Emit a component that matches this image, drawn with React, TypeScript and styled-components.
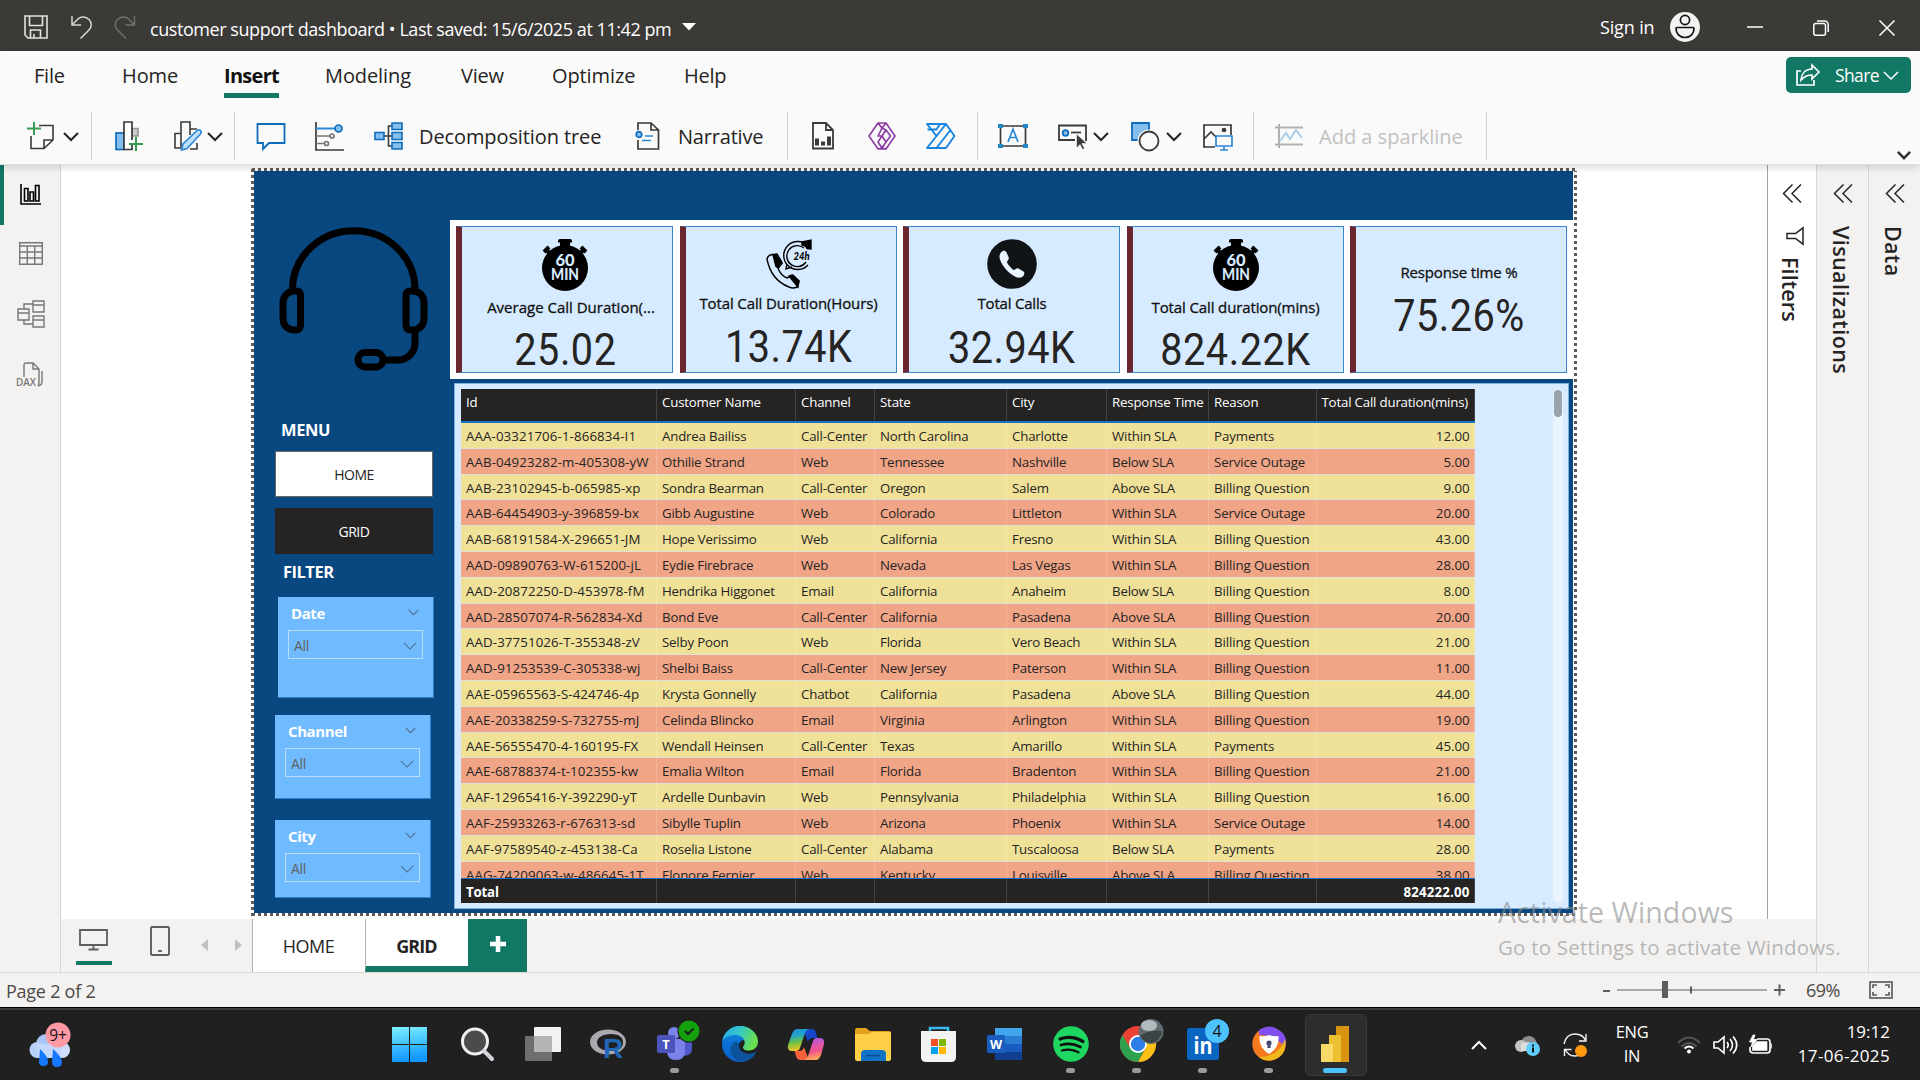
import React from "react";
import styled, { createGlobalStyle, css } from "styled-components";

const Global = createGlobalStyle`
  * { box-sizing: border-box; }
  body { margin: 0; overflow: hidden; font-family: "Open Sans", "Noto Sans", sans-serif; color: #252423; }
  svg { display: block; flex: none; overflow: visible; }
`;

const green = "#117865";
const navy = "#08477f";

const Screen = styled.div`
  position: relative;
  width: 1920px;
  height: 1080px;
  overflow: hidden;
  display: grid;
  grid-template-rows: 51px 114px 807px 35px 73px;
  background: #fff;
`;

/* A single-line text with its own size, tracking and reserved width */
const Txt = styled.span<{ $s: number; $w?: number; $ls?: number; $ml?: number; $mt?: number; $c?: string }>`
  flex: none;
  white-space: nowrap;
  font-size: ${(p) => p.$s}px;
  width: ${(p) => (p.$w ? p.$w + "px" : "auto")};
  letter-spacing: ${(p) => p.$ls ?? 0}px;
  margin-left: ${(p) => p.$ml ?? 0}px;
  margin-top: ${(p) => p.$mt ?? 0}px;
  color: ${(p) => p.$c ?? "inherit"};
`;

const Glyph = styled.svg<{ $ml?: number; $mt?: number }>`
  margin-left: ${(p) => p.$ml ?? 0}px;
  margin-top: ${(p) => p.$mt ?? 0}px;
  fill: none;
`;

/* ---------- title bar ---------- */
const TitleBar = styled.header`
  display: flex;
  align-items: center;
  background: #3b3a37;
  color: #fff;
  padding: 3px 25px 0 24px;
`;
const Push = styled.div`
  flex: 1;
`;

function Title() {
  return (
    <TitleBar>
      <Glyph width="24" height="24" viewBox="0 0 24 24" stroke="#e4e2e0" strokeWidth="1.6">
        <path d="M1 1h22v22H4l-3-3z M5.500 1v9.500h13V1 M6.500 23v-8h10v8 M10 19v4" />
      </Glyph>
      <Glyph $ml={23} width="21" height="24" viewBox="0 0 21 24" stroke="#d8d6d4" strokeWidth="1.5">
        <path d="M1 1v9h9 M1.500 9.500L7 4c3-3 8-2.500 11 .5s3 7.500 0 10.500L9.500 23.500" />
      </Glyph>
      <Glyph $ml={22} width="22" height="24" viewBox="0 0 21 24" stroke="#72716f" strokeWidth="1.4">
        <path d="M20 1v9h-9 M19.500 9.500L14 4C11 1 6 1.500 3 4.500s-3 7.500 0 10.500L11.500 23.500" />
      </Glyph>
      <Txt $s={18} $ls={-0.44} $ml={14} $mt={4} $w={532}>customer support dashboard • Last saved: 15/6/2025 at 11:42 pm</Txt>
      <Glyph width="14" height="8" viewBox="0 0 14 8"><path d="M0 0h14L7 7.500z" fill="#fff" /></Glyph>
      <Push />
      <Txt $s={18} $w={70} $ls={-0.15}>Sign in</Txt>
      <Glyph width="30" height="30" viewBox="0 0 30 30" stroke="#111" strokeWidth="1.700">
        <circle cx="15" cy="15" r="15" fill="#f3f2f1" stroke="none" />
        <circle cx="15" cy="8" r="4.600" />
        <path d="M6 16.500q0-1 1-1h16q1 0 1 1c0 5-3.500 9-9 9s-9-4-9-9z" />
      </Glyph>
      <Glyph $ml={47} width="16" height="16" viewBox="0 0 16 16" stroke="#fff" strokeWidth="1.500"><path d="M0 8h16" /></Glyph>
      <Glyph $ml={50} $mt={2} width="16" height="16" viewBox="0 0 16 16" stroke="#fff" strokeWidth="1.500">
        <rect x=".8" y="3.500" width="11.700" height="11.700" rx="2" />
        <path d="M4 1h7.500a3.700 3.700 0 0 1 3.700 3.700V12" />
      </Glyph>
      <Glyph $ml={50} $mt={2} width="16" height="16" viewBox="0 0 17 17" stroke="#fff" strokeWidth="1.600"><path d="M.5.5l16 16M16.500.5l-16 16" /></Glyph>
    </TitleBar>
  );
}

/* ---------- ribbon ---------- */
const Ribbon = styled.section`
  display: grid;
  grid-template-rows: 60px 54px;
  background: #fafafa;
  border-bottom: 1px solid #e1dfdd;
  box-shadow: 0 2px 8px rgba(0, 0, 0, 0.16);
  z-index: 2;
`;
const TabRow = styled.nav`
  display: flex;
  padding: 0 9px 0 34px;
  align-items: flex-start;
`;
const Tab = styled.div<{ $w: number; $gap: number; $on?: boolean; $ls: number }>`
  width: ${(p) => p.$w}px;
  margin-right: ${(p) => p.$gap}px;
  height: 47px;
  padding-top: 11px;
  line-height: 28px;
  font-size: 20px;
  white-space: nowrap;
  letter-spacing: ${(p) => p.$ls}px;
  border-bottom: 5px solid ${(p) => (p.$on ? green : "transparent")};
  font-weight: ${(p) => (p.$on ? 700 : 400)};
  color: ${(p) => (p.$on ? "#111" : "#252423")};
`;
const ShareButton = styled.button`
  display: flex;
  align-items: center;
  width: 125px;
  height: 36px;
  margin-top: 6px;
  padding: 0 12px 0 10px;
  border: 0;
  border-radius: 5px;
  background: ${green};
  color: #fff;
  font-family: inherit;
`;
const ToolRow = styled.div`
  display: flex;
  align-items: center;
  height: 50px;
  padding-left: 27px;
`;
const Divider = styled.i<{ $l: number; $r: number }>`
  flex: none;
  width: 1px;
  height: 48px;
  margin: 0 ${(p) => p.$r}px 0 ${(p) => p.$l}px;
  background: #d2d0ce;
`;
const CollapseSlot = styled.div`
  margin: 37px 9px 0 auto;
`;
const Chev = ({ ml, c = "#252423", w = 16, sw = 2 }: { ml: number; c?: string; w?: number; sw?: number }) => (
  <Glyph $ml={ml} width={w} height={w / 2 + 1} viewBox="0 0 16 9" stroke={c} strokeWidth={sw}><path d="M1 1l7 7 7-7" /></Glyph>
);
const B = "#0f6cbd", LB = "#83beec", K = "#3b3a39";

const tabs: [string, number, number, number][] = [
  ["File", 31, 57, -0.2], ["Home", 56, 46, -0.1], ["Insert", 55, 46, -0.7], ["Modeling", 88, 48, -0.1],
  ["View", 45, 46, -0.2], ["Optimize", 85, 47, -0.1], ["Help", 44, 0, -0.3],
];

function RibbonBar() {
  return (
    <Ribbon>
      <TabRow>
        {tabs.map(([t, w, g, ls]) => <Tab key={t} $w={w} $gap={g} $ls={ls} $on={t === "Insert"}>{t}</Tab>)}
        <Push />
        <ShareButton>
          <Glyph width="24" height="22" viewBox="0 0 24 22" stroke="#fff" strokeWidth="1.700">
            <path d="M5 7H1v14h17v-5 M16 1l7 7-7 7v-4c-5 0-8 1.500-11 5 .5-6 4-11 11-11z" />
          </Glyph>
          <Txt $s={17.5} $ml={12} $w={50} $ls={-0.6}>Share</Txt>
          <Chev ml={1} c="#fff" w={16} sw={1.5} />
        </ShareButton>
      </TabRow>
      <ToolRow>
        <Glyph width="28" height="28" viewBox="0 0 28 28" stroke={K} strokeWidth="1.600">
          <path d="M12 3.500h14V18l-9 8.500H4V14 M26 18h-9v8.500" /><path d="M0 6.500h14M7 0v13" stroke="#3a9b4f" strokeWidth="2" />
        </Glyph>
        <Chev ml={8} />
        <Divider $l={12} $r={23} />
        <Glyph width="28" height="30" viewBox="0 0 28 30" stroke={K} strokeWidth="1.700">
          <rect x="1" y="12" width="8" height="16.500" fill={LB} stroke={B} /><path d="M17 7.500h6V15h-6z" fill="#ccc" stroke="#979593" />
          <path d="M17 22v6.500H9V1h8v18" fill="#fff" /><path d="M14 23h14M21 16v14" stroke="#3a9b4f" strokeWidth="2" />
        </Glyph>
        <Glyph $ml={31} width="28" height="30" viewBox="0 0 28 30" stroke={K} strokeWidth="1.600">
          <path d="M7 27H1V12.500h6M7 27V1h9v13 M16 8h7M16 28h7v-6" /><path d="M7.500 29l1.500-6L23 9.500q2-1.500 3.500 0t0 3.500L13 27.500z" fill="#bfe0f7" stroke="#2b88d8" />
        </Glyph>
        <Chev ml={5} />
        <Divider $l={11} $r={21} />
        <Glyph width="30" height="28" viewBox="0 0 30 28" stroke={B} strokeWidth="1.800"><path d="M1.500 2h27v19H13l-6 6v-6H1.500z" /></Glyph>
        <Glyph $ml={29} width="29" height="29" viewBox="0 0 29 29" stroke="#797775" strokeWidth="1.700">
          <path d="M1 0v28h28" stroke={K} /><path d="M1 6.500h19" stroke="#2b88d8" strokeWidth="2" /><circle cx="23.500" cy="6.500" r="3.500" fill={LB} stroke={B} />
          <path d="M1 14h14M1 21.500h8" /><circle cx="17" cy="14" r="2" /><circle cx="11.500" cy="21.500" r="2" />
        </Glyph>
        <Glyph $ml={30} width="29" height="28" viewBox="0 0 29 28" stroke={B} strokeWidth="1.600">
          <path d="M10 14h9M19 4h-4.500v20H19" stroke={K} />
          <path d="M1 10.500h9v7H1zM18 1h10v6.500H18zM18 10.500h10v7H18zM18 20.500h10V27H18z" fill={LB} />
        </Glyph>
        <Txt $s={20} $ml={16} $w={181} $ls={-0.1}>Decomposition tree</Txt>
        <Glyph $ml={36} width="24" height="28" viewBox="0 0 24 28" stroke={K} strokeWidth="1.700">
          <path d="M2 8V1h13l7.500 7v19H2v-9M15 1v7h7.500" /><circle cx="3" cy="12.500" r="2.800" fill={LB} stroke={B} /><path d="M9 14h8M6 18.500h9" stroke="#2b88d8" />
        </Glyph>
        <Txt $s={20} $ml={18} $w={87} $ls={-0.2}>Narrative</Txt>
        <Divider $l={22} $r={24} />
        <Glyph width="22" height="28" viewBox="0 0 22 28" stroke={K} strokeWidth="1.800">
          <path d="M1 1h13l7 7v18.500H1zM14 1v7h7" /><path d="M5 23.500v-7M11 23.500v-4M17 23.500v-9" strokeWidth="4" />
        </Glyph>
        <Glyph $ml={34} width="28" height="28" viewBox="0 0 28 28" stroke="#8c3aa3" strokeWidth="1.600" strokeLinejoin="round">
          <path d="M10 1h8l9 13-9 13h-8L1 14z M10 1l4 5 4-5 M14 6l-4 8 4 0 4-6-4-2 M10 14l4-0 4 6-4 6-4-6 4-6 M18 8l4.500 6-4.500 6 M14 26l-4 1 M14 26l4 1" />
        </Glyph>
        <Glyph $ml={30} width="30" height="26" viewBox="0 0 30 26" stroke="#1684e0" strokeWidth="1.900" strokeLinejoin="round">
          <path d="M1 1h19l8.500 12-8.500 12H1l9.500-12z M1.500 6.500h9L14 1 M1 25L20 1 M10.500 25L24.500 7" />
        </Glyph>
        <Divider $l={21} $r={20} />
        <Glyph width="30" height="26" viewBox="0 0 30 26" stroke={K} strokeWidth="1.700">
          <path d="M2.500 3h25v20h-25z" /><path d="M0 1h5v4H0zM25 1h5v4h-5zM0 21h5v4H0zM25 21h5v4h-5z" fill="#2487c9" stroke="none" />
          <path d="M10 19l5-13 5 13M12 14.500h6" stroke="#2b88d8" />
        </Glyph>
        <Glyph $ml={30} width="29" height="27" viewBox="0 0 29 27" stroke={K} strokeWidth="1.800">
          <path d="M17 17H1V2.500h27V18" /><circle cx="7.500" cy="10" r="2.800" fill={LB} stroke={B} /><path d="M13 9.500h10" />
          <path d="M18.500 11v14l3.500-3.500 2.500 5 2-1-2.500-5h5z" fill={K} stroke="#fafafa" strokeWidth=".6" />
        </Glyph>
        <Chev ml={6} />
        <Glyph $ml={22} width="28" height="29" viewBox="0 0 28 29" stroke={K} strokeWidth="1.800">
          <path d="M1 1h17v17H1z" fill={LB} stroke={B} /><circle cx="18" cy="19" r="11.500" fill="#fafafa" stroke="none" /><circle cx="18" cy="19" r="9.500" fill="#fafafa" />
        </Glyph>
        <Chev ml={7} />
        <Glyph $ml={21} width="30" height="27" viewBox="0 0 30 27" stroke={K} strokeWidth="1.700">
          <path d="M12 24H1V2h27v10M1 16l7-7 6 6" /><circle cx="21" cy="7" r="1.500" fill={K} />
          <path d="M13 13h16v10H13zM21 23v4M17 27h8" stroke="#2b88d8" fill="#fafafa" />
        </Glyph>
        <Divider $l={20} $r={21} />
        <Glyph width="29" height="26" viewBox="0 0 29 26" stroke="#b3b1af" strokeWidth="2">
          <path d="M0 4.500h28M0 21.500h28M4 1v24" /><path d="M5 18l6-8 4 6 6-9 6 8" stroke="#a9cfe6" />
        </Glyph>
        <Txt $s={20} $ml={15} $w={145} $ls={0} $c="#c3c1bf">Add a sparkline</Txt>
        <Divider $l={22} $r={0} />
        <CollapseSlot><Chev ml={0} w={14} c="#333" sw={3} /></CollapseSlot>
      </ToolRow>
    </Ribbon>
  );
}

/* ---------- body ---------- */
const Body = styled.main`
  display: grid;
  grid-template-columns: 61px 1755px 52px 52px;
  min-height: 0;
`;
const Rail = styled.aside`
  background: #f3f2f1;
  border-right: 1px solid #d9d7d5;
`;
const RailItem = styled.div<{ $on?: boolean; $h: number }>`
  height: ${(p) => p.$h}px;
  display: flex;
  align-items: center;
  justify-content: center;
  padding-right: ${(p) => (p.$on ? 4 : 0)}px;
  padding-left: ${(p) => (p.$on ? 0 : 2)}px;
  padding-top: ${(p) => (p.$on ? 0 : 2)}px;
  padding-bottom: ${(p) => (p.$on ? 2 : 0)}px;
  border-left: ${(p) => (p.$on ? 4 : 0)}px solid ${green};
`;
const Center = styled.div`
  display: grid;
  grid-template-rows: 754px 53px;
`;
const Stage = styled.div`
  display: grid;
  grid-template-columns: 190px 1326px 190px 49px;
  background: #fff;
`;
const dots = (dir: string) => `repeating-linear-gradient(${dir}, #5d5b59 0 3px, #fff 3px 6px)`;
const Dotted = styled.div`
  grid-column: 2;
  height: 748px;
  margin-top: 3px;
  padding: 3px 4px 3px 3px;
  background-image: ${dots("90deg")}, ${dots("90deg")}, ${dots("180deg")}, ${dots("180deg")};
  background-size: 100% 3px, 100% 3px, 3px 100%, 3px 100%;
  background-position: 1px 0, 1px 100%, 0 1px, 100% 1px;
  background-repeat: no-repeat;
`;
const Report = styled.div`
  display: grid;
  grid-template-columns: 196px 1fr;
  grid-template-rows: 49px 1fr;
  height: 742px;
  background: ${navy};
`;
const Side = styled.div`
  grid-row: 1 / 3;
  display: flex;
  flex-direction: column;
  padding: 54px 16px 0 21px;
`;
const SideTitle = styled.h3<{ $mt: number; $ml: number; $h: number; $ls: number }>`
  margin: ${(p) => p.$mt}px 0 0 ${(p) => p.$ml}px;
  height: ${(p) => p.$h}px;
  line-height: 24px;
  font-size: 16.5px;
  font-weight: 700;
  letter-spacing: ${(p) => p.$ls}px;
  color: #fff;
`;
const NavButton = styled.button<{ $dark?: boolean }>`
  flex: none;
  width: 158px;
  height: 46px;
  margin: 0 0 11px;
  padding: 1px 0 0;
  font: 400 14px "Open Sans", sans-serif;
  letter-spacing: -0.5px;
  color: ${(p) => (p.$dark ? "#fff" : "#252423")};
  background: ${(p) => (p.$dark ? "#252423" : "#fff")};
  border: 1px solid ${(p) => (p.$dark ? "#252423" : "#666")};
`;
const SlicerBox = styled.section<{ $h: number; $mt: number; $ml?: number }>`
  flex: none;
  width: 156px;
  height: ${(p) => p.$h}px;
  margin: ${(p) => p.$mt}px 0 0 ${(p) => p.$ml ?? 0}px;
  padding: 4px 10px 0 10px;
  background: #70bbff;
  border: solid #2f7dc7;
  border-width: 0 1px 1px 0;
`;
const SlicerHead = styled.div`
  display: flex;
  justify-content: space-between;
  height: 29px;
  padding: 0 4px 0 3px;
  line-height: 24px;
  font-size: 15px;
  font-weight: 700;
  letter-spacing: -0.4px;
  color: #fff;
  svg { margin-top: 8px; }
`;
const SlicerSelect = styled.div`
  display: flex;
  justify-content: space-between;
  align-items: center;
  height: 29px;
  padding: 2px 5px 0 5px;
  border: 1px solid #b9dcfb;
  font-size: 14px;
  letter-spacing: -0.3px;
  color: #605e5c;
`;

function Slicer({ name, h, mt, ml }: { name: string; h: number; mt: number; ml?: number }) {
  return (
    <SlicerBox $h={h} $mt={mt} $ml={ml}>
      <SlicerHead>{name}<Chev ml={0} w={11} c="#4d6f90" sw={1.5} /></SlicerHead>
      <SlicerSelect>All<Chev ml={0} w={14} c="#4d6f90" sw={1.3} /></SlicerSelect>
    </SlicerBox>
  );
}

const Main = styled.div`
  grid-column: 2;
  grid-row: 2;
  display: grid;
  grid-template-rows: 159px 534px;
`;
const KpiStrip = styled.div`
  display: grid;
  grid-template-columns: repeat(5, 217px);
  column-gap: 6.5px;
  padding: 6px 5px 6px 6px;
  background: #fff;
`;
const KpiCard = styled.article<{ $pt: number }>`
  display: flex;
  flex-direction: column;
  align-items: center;
  height: 147px;
  padding-top: ${(p) => p.$pt}px;
  padding-right: 4px;
  background: #d6ebff;
  border: 1px solid #3a86cd;
  border-left: 6px solid #6b2630;
`;
const KpiLabel = styled.div<{ $mt: number; $ls: number; $ml?: number }>`
  margin-top: ${(p) => p.$mt}px;
  margin-left: ${(p) => p.$ml ?? 0}px;
  line-height: 24px;
  font-size: 15px;
  font-weight: 500;
  -webkit-text-stroke: 0.3px #111;
  letter-spacing: ${(p) => p.$ls}px;
  white-space: nowrap;
  color: #111;
`;
const KpiValue = styled.div<{ $mt: number }>`
  margin-top: ${(p) => p.$mt}px;
  font: 400 44.5px/44px Roboto, sans-serif;
  letter-spacing: 0.6px;
  transform: scaleX(0.89);
  white-space: nowrap;
`;

const Stopwatch = () => (
  <Glyph width="46" height="52" viewBox="0 0 46 52">
    <circle cx="23" cy="29" r="23" fill="#000" />
    <path d="M18 0h10q2 0 2 2v1.500h-2V9H18V3.500h-2V2q0-2 2-2z" fill="#000" />
    <path d="M2 13l5-5M4 10.500l6 6M44 13l-5-5M42 10.500l-6 6" stroke="#000" strokeWidth="4" />
    <text x="23" y="27" textAnchor="middle" fontFamily="Lato, sans-serif" fontWeight="900" fontSize="16.500" fill="#d6ebff" textLength="19">60</text>
    <text x="23" y="41" textAnchor="middle" fontFamily="Lato, sans-serif" fontWeight="900" fontSize="16" fill="#d6ebff" textLength="28" lengthAdjust="spacingAndGlyphs">MIN</text>
  </Glyph>
);
const Phone24 = () => (
  <Glyph width="46" height="48" viewBox="0 0 46 48" stroke="#000" strokeWidth="1.400">
    <path d="M1 19q1-4 5-4.500h5l5 9-4 5q3 7 9 9.500l6-3 6 6-2 6q-4 2-8 0Q5 40 1 19z" fill="#d6ebff" />
    <path d="M7 15l4-1 5 8.500-4 5-2-1zM26 35l7 6-1 6-9-11z" fill="#000" />
    <path d="M42 6a14 14 0 1 0 0 19M38 8a10.500 10.500 0 1 0 2 14 M21 24l-1 5 6-2" />
    <path d="M36 2l9-2v9l-4-.5q-1-3-5-3.500z" fill="#000" />
    <text x="27.500" y="20" fontFamily="Lato, sans-serif" fontStyle="italic" fontWeight="900" fontSize="11.500" fill="#000" stroke="none" textLength="16" lengthAdjust="spacingAndGlyphs">24h</text>
  </Glyph>
);
const PhoneDisc = () => (
  <Glyph width="50" height="50" viewBox="0 0 50 50">
    <circle cx="25" cy="25" r="24.800" fill="#111417" />
    <path d="M14 13.500c2-2.500 4.500-2 5.500 0l2 4.500c.7 1.600 0 2.800-1.500 4.500-.8 1 4 7.500 7 8.500 1 .3 2.500-2.500 4.500-1.500l5 3c1.500 1 1 3.500-1.500 5.500-3 2-7 0-11-3C18 30.500 13 23 12.500 18c0-2 .5-3.500 1.500-4.500z" fill="#eaf4ff" />
  </Glyph>
);
const Headset = () => (
  <Glyph $ml={4} width="149" height="146" viewBox="0 0 149 146" stroke="#000" strokeWidth="7">
    <path d="M13.500 63V62a61.300 58.500 0 0 1 122.500 0v1 M136 106v12a17 17 0 0 1-17 17h-12" />
    <path d="M16 66h1q4.500 0 4.500 4.500v29q0 5.500-4.500 5.500h-1c-8 0-12-5-12-12V78c0-7 5-12 12-12zM132 66h1c8 0 12 5 12 12v15c0 7-4 12-12 12h-1q-5 0-5-5.500v-29q0-4.500 5-4.500z" />
    <rect x="79" y="127.500" width="25" height="14.500" rx="7.200" />
  </Glyph>
);

const kpis = [
  { label: "Average Call Duration(...", value: "25.02", icon: <Stopwatch />, pt: 12, mt: 4, vt: 9, ls: 0, ml: 12 },
  { label: "Total Call Duration(Hours)", value: "13.74K", icon: <Phone24 />, pt: 13, mt: 3, vt: 10, ls: -0.12 },
  { label: "Total Calls", value: "32.94K", icon: <PhoneDisc />, pt: 12, mt: 2, vt: 10.5, ls: -0.2 },
  { label: "Total Call duration(mins)", value: "824.22K", icon: <Stopwatch />, pt: 12, mt: 4, vt: 9, ls: -0.12 },
  { label: "Response time %", value: "75.26%", icon: null, pt: 33, mt: 0, vt: 10, ls: -0.15 },
];

const TablePanel = styled.div`
  margin: 4px;
  display: flex;
  justify-content: space-between;
  padding: 5px 5px 5px 6px;
  background: #d6ebff;
  border: 1px solid #7eb0dd;
  height: 526px;
`;
const Grid = styled.div`
  width: 1014px;
  height: 514px;
  display: flex;
  flex-direction: column;
`;
const rowGrid = css`
  display: grid;
  grid-template-columns: 196px 139px 79px 132px 100px 102px 107.5px 158.5px;
  grid-template-rows: 100%;
`;
const HeadRow = styled.div`
  ${rowGrid}
  flex: none;
  height: 34px;
  background: #252423;
  border-bottom: 2px solid #1571c9;
  color: #fff;
`;
const Rows = styled.div`
  height: 454.500px;
  overflow: hidden;
`;
const Row = styled.div<{ $alt: boolean }>`
  ${rowGrid}
  height: 25.8px;
  background: ${(p) => (p.$alt ? "#f0a587" : "#f0e199")};
  border-bottom: 1px solid #e3e0d8;
`;
const TotalRow = styled.div`
  ${rowGrid}
  flex: none;
  height: 25.500px;
  background: #252423;
  border-top: 1px solid #1571c9;
  color: #fff;
  font-weight: 700;
`;
const Cell = styled.div<{ $right?: boolean; $head?: boolean; $total?: boolean; $ls?: number }>`
  min-height: 0;
  padding: 0 ${(p) => (p.$right ? (p.$head ? 6 : 4.5) : 0)}px 0 5px;
  text-align: ${(p) => (p.$right ? "right" : "left")};
  font-size: 13.3px;
  line-height: ${(p) => (p.$head || p.$total ? 26 : 27)}px;
  letter-spacing: ${(p) => p.$ls ?? -0.2}px;
  white-space: nowrap;
  border-right: 1px solid ${(p) => (p.$head || p.$total ? "#444" : "rgba(255,255,255,0.18)")};
`;
const Track = styled.div`
  width: 10px;
  border-radius: 5px;
  background: #e9f4ff;
  padding: 1px;
  &::before {
    content: "";
    display: block;
    height: 27px;
    border-radius: 4px;
    background: #9aa3ab;
  }
`;

const heads = ["Id", "Customer Name", "Channel", "State", "City", "Response Time", "Reason", "Total Call duration(mins)"];
const W = "Within SLA", A = "Above SLA", L = "Below SLA", BQ = "Billing Question", SO = "Service Outage", CC = "Call-Center";
const data: string[][] = [
  ["AAA-03321706-1-866834-I1", "Andrea Bailiss", CC, "North Carolina", "Charlotte", W, "Payments", "12.00"],
  ["AAB-04923282-m-405308-yW", "Othilie Strand", "Web", "Tennessee", "Nashville", L, SO, "5.00"],
  ["AAB-23102945-b-065985-xp", "Sondra Bearman", CC, "Oregon", "Salem", A, BQ, "9.00"],
  ["AAB-64454903-y-396859-bx", "Gibb Augustine", "Web", "Colorado", "Littleton", W, SO, "20.00"],
  ["AAB-68191584-X-296651-JM", "Hope Verissimo", "Web", "California", "Fresno", W, BQ, "43.00"],
  ["AAD-09890763-W-615200-jL", "Eydie Firebrace", "Web", "Nevada", "Las Vegas", W, BQ, "28.00"],
  ["AAD-20872250-D-453978-fM", "Hendrika Higgonet", "Email", "California", "Anaheim", L, BQ, "8.00"],
  ["AAD-28507074-R-562834-Xd", "Bond Eve", CC, "California", "Pasadena", A, BQ, "20.00"],
  ["AAD-37751026-T-355348-zV", "Selby Poon", "Web", "Florida", "Vero Beach", W, BQ, "21.00"],
  ["AAD-91253539-C-305338-wj", "Shelbi Baiss", CC, "New Jersey", "Paterson", W, BQ, "11.00"],
  ["AAE-05965563-S-424746-4p", "Krysta Gonnelly", "Chatbot", "California", "Pasadena", A, BQ, "44.00"],
  ["AAE-20338259-S-732755-mJ", "Celinda Blincko", "Email", "Virginia", "Arlington", W, BQ, "19.00"],
  ["AAE-56555470-4-160195-FX", "Wendall Heinsen", CC, "Texas", "Amarillo", W, "Payments", "45.00"],
  ["AAE-68788374-t-102355-kw", "Emalia Wilton", "Email", "Florida", "Bradenton", W, BQ, "21.00"],
  ["AAF-12965416-Y-392290-yT", "Ardelle Dunbavin", "Web", "Pennsylvania", "Philadelphia", W, BQ, "16.00"],
  ["AAF-25933263-r-676313-sd", "Sibylle Tuplin", "Web", "Arizona", "Phoenix", W, SO, "14.00"],
  ["AAF-97589540-z-453138-Ca", "Roselia Listone", CC, "Alabama", "Tuscaloosa", L, "Payments", "28.00"],
  ["AAG-74209063-w-486645-1T", "Elonore Fernier", "Web", "Kentucky", "Louisville", A, BQ, "38.00"],
];

/* ---------- collapsed panes ---------- */
const Pane = styled.aside<{ $white?: boolean }>`
  display: flex;
  flex-direction: column;
  align-items: center;
  padding-top: 19px;
  padding-left: ${(p) => (p.$white ? 1 : 2)}px;
  border-left: 1px solid ${(p) => (p.$white ? "#a5a3a1" : "#d9d7d5")};
  background: ${(p) => (p.$white ? "#fff" : "#f3f2f1")};
`;
const Vertical = styled.div<{ $mt: number; $ls: number }>`
  writing-mode: vertical-rl;
  margin-top: ${(p) => p.$mt}px;
  margin-right: 5px;
  font-size: 21.5px;
  line-height: 24px;
  font-weight: 600;
  letter-spacing: ${(p) => p.$ls}px;
`;
const Expand = () => (
  <Glyph width="19" height="19" viewBox="0 0 19 19" stroke="#252423" strokeWidth="1.500"><path d="M9.500.5l-9 9 9 9M18 .5l-9 9 9 9" /></Glyph>
);

/* ---------- page tabs and status ---------- */
const PageBar = styled.div`
  display: flex;
  background: #f3f2f1;
`;
const ViewIcons = styled.div`
  width: 191px;
  display: flex;
  align-items: flex-start;
  padding: 7px 0 0 15px;
`;
const ViewOn = styled.div`
  display: flex;
  width: 36px;
  height: 39px;
  padding: 3px 0 0 3px;
  border-bottom: 4px solid ${green};
`;
const PageTab = styled.div<{ $w: number; $on?: boolean }>`
  width: ${(p) => p.$w}px;
  border-left: 1px solid #b3b1af;
  border-bottom: ${(p) => (p.$on ? 6 : 0)}px solid ${green};
  background: #fff;
  padding: 4px 1px 0 0;
  text-align: center;
  line-height: 46px;
  font-size: 18px;
  font-weight: ${(p) => (p.$on ? 700 : 400)};
  letter-spacing: ${(p) => (p.$on ? -0.9 : -0.5)}px;
`;
const AddPage = styled.button`
  width: 59px;
  border: 0;
  padding: 0 0 3px 1px;
  background: ${green};
  display: flex;
  align-items: center;
  justify-content: center;
`;
const Status = styled.footer`
  display: flex;
  align-items: center;
  background: #f3f2f1;
  border-top: 1px solid #d9d7d5;
  padding: 0 27px 0 6px;
  color: #4b4948;
`;

/* ---------- desktop watermark and taskbar ---------- */
const Watermark = styled.div`
  position: absolute;
  z-index: 5;
  left: 1498px;
  top: 892px;
  color: rgba(140, 140, 140, 0.6);
  white-space: nowrap;
`;
const MarkBig = styled.div`
  font-size: 28.500px;
  line-height: 40px;
  letter-spacing: 0.1px;
`;
const MarkSmall = styled.div`
  font-size: 20.500px;
  line-height: 30px;
  letter-spacing: 0.2px;
`;
const Taskbar = styled.div`
  display: flex;
  align-items: center;
  background: #202020;
  border-top: 1px solid #000;
  box-shadow: inset 0 2px 0 #3c3c3c;
  padding: 2px 30px 0 28px;
  color: #fff;
`;
const Apps = styled.div`
  display: flex;
  margin-left: 304px;
`;
const AppSlot = styled.div<{ $active?: boolean }>`
  position: relative;
  width: 66px;
  height: 70px;
  &::before {
    content: "";
    position: absolute;
    display: ${(p) => (p.$active ? "block" : "none")};
    left: 5px; top: 4px; width: 60px; height: 60px;
    border-radius: 6px;
    background: #2d2d2d;
    border: 1px solid #383838;
  }
  svg { position: relative; }
`;
const Running = styled.i<{ $wide?: boolean }>`
  position: absolute;
  bottom: 7px;
  left: ${(p) => (p.$wide ? 23 : 30)}px;
  width: ${(p) => (p.$wide ? 24 : 9)}px;
  height: 5px;
  border-radius: 3px;
  background: ${(p) => (p.$wide ? "#4cc2ff" : "#9a9a9a")};
`;
const Clock = styled.div<{ $center?: boolean; $w: number; $ml: number }>`
  width: ${(p) => p.$w}px;
  margin-left: ${(p) => p.$ml}px;
  font-size: ${(p) => (p.$center ? 16.5 : 17)}px;
  line-height: 24px;
  letter-spacing: ${(p) => (p.$center ? -0.3 : 0)}px;
  text-align: ${(p) => (p.$center ? "center" : "right")};
  padding-bottom: 3px;
  white-space: nowrap;
`;
const DateLine = styled.div`
  letter-spacing: 0.35px;
`;

const Ramp = ({ id, stops, v }: { id: string; stops: string[]; v?: boolean }) => (
  <linearGradient id={id} x1="0" y1="0" x2={v ? "0.15" : "1"} y2={v ? "1" : "0.3"}>
    {stops.map((s, i) => <stop key={i} offset={i / (stops.length - 1)} stopColor={s} />)}
  </linearGradient>
);

const appIcons: [string, React.ReactNode, number, number][] = [
  ["start", <><defs><Ramp id="win" v stops={["#7df0ff", "#45c4ff", "#0f96ff"]} /></defs><path d="M16 17h17v17H16zM34 17h17v17H34zM16 35h17v17H16zM34 35h17v17H34z" fill="url(#win)" /></>, 0, 0],
  ["search", <><circle cx="33" cy="31.500" r="12.500" fill="#4b4b4b" stroke="#f0f0f0" strokeWidth="3" /><path d="M42 41l8 8" stroke="#d5d5de" strokeWidth="4" strokeLinecap="round" /></>, 0, 0],
  ["tasks", <><rect x="26" y="17" width="27" height="25" rx="1" fill="#f2f2f2" /><rect x="17" y="26" width="27" height="25" rx="1" fill="#6e6e6e" /><path d="M26 26h18v16H26z" fill="#b4b4b4" /></>, 0, 0],
  ["r", <><path d="M33 19.500c10 0 18 5.500 18 12.500s-8 12.500-18 12.500-18-5.500-18-12.500 8-12.500 18-12.500zM36 24c-8 0-14 3.500-14 8.500S28 41 36 41s12-3.500 12-8.500S44 24 36 24z" fillRule="evenodd" fill="#a9a9ae" /><text x="28" y="47.500" fontFamily="Liberation Sans, sans-serif" fontWeight="700" fontSize="28" fill="#2266b8">R</text></>, 0, 1],
  ["teams", <><circle cx="34" cy="23" r="6" fill="#7b83eb" /><path d="M44 31h8v8q0 6-8 7z" fill="#5059c9" /><path d="M27 29h18v12q0 9-9 9t-9-9z" fill="#7b83eb" /><rect x="17" y="25" width="18" height="18" rx="1.500" fill="#4b53bc" /><text x="26" y="39" textAnchor="middle" fontFamily="Open Sans, sans-serif" fontWeight="700" fontSize="13" fill="#fff">T</text><circle cx="49" cy="21" r="11.500" fill="#202020" /><circle cx="49" cy="21" r="10.500" fill="#13a10e" /><path d="M45 21l3 3 5.500-5.500" stroke="#202020" strokeWidth="2" /></>, 1, -0.5],
  ["edge", <><defs><Ramp id="edgeTop" stops={["#2aa8ec", "#33c6c6", "#6be04f"]} /><Ramp id="edgeBody" v stops={["#1b9de2", "#0c6fd6", "#0a63c9"]} /></defs><circle cx="33" cy="34" r="18" fill="url(#edgeBody)" /><path d="M28 31c-3 2.500-5 6-4.500 10 .8 6 5.500 10 11 10.800 6-.5 11-3.500 14-8z" fill="#0c539c" /><path d="M32 35a6 6 0 0 1 5-5l14 4c0 3-.8 6-2 8-3 1.500-6 2-9 1.500-5-.7-8.500-4-8-8.500z" fill="#202020" /><path d="M15.300 31C17 22 24 16 33 16c10 0 18 7.500 18 15.500 0 6-4.500 9-9 9-4.500 0-6-1.500-6-3 0-1.500 1.700-2 1.700-5 0-4-4-7.500-9.700-7.500-5 0-10 2-12.700 6z" fill="url(#edgeTop)" /></>, 0, 1],
  ["copilot", <><defs><Ramp id="cpA" v stops={["#1c8be0", "#21a7c9", "#74c23f", "#f3c22b"]} /><Ramp id="cpB" v stops={["#9c5cf0", "#d857b5", "#f0568a", "#fda35a"]} /></defs><path d="M30 19h9q3 0 4 4l1.500 5H40q-4 0-5 4z" fill="#1747c8" /><path d="M36 50h-9q-3 0-4-4l-1.500-5H26q4 0 5-4z" fill="#f4603a" /><path d="M24 19h12q-3 1-4 4l-5 15q-1 3-4 3h-4q-5 0-4-6l4-11q2-5 5-5z" fill="url(#cpA)" /><path d="M43 50H31q3-1 4-4l5-15q1-3 4-3h3q5 0 4 6l-3 11q-2 5-5 5z" fill="url(#cpB)" /></>, 0, 0.5],
  ["files", <><path d="M15 20q0-2 2-2h9l4 3h19q2 0 2 2v10H15z" fill="#e2a21a" /><path d="M15 24h14l3-2h19v27q0 2-2 2H17q-2 0-2-2z" fill="#ffcf48" /><path d="M21 51v-7q0-4 4-4h17q4 0 4 4v7z" fill="#1272c6" /><path d="M26 45.500h14" stroke="#0a4d92" strokeWidth="1.500" /></>, 0, 1.5],
  ["store", <><path d="M24 23v-5h18v5" stroke="#37b8ef" strokeWidth="2.500" /><path d="M15 21h35v26q0 5-5 5H20q-5 0-5-5z" fill="#f3f3f3" /><path d="M25 29h7v7h-7z" fill="#f25022" /><path d="M33 29h7v7h-7z" fill="#7fba00" /><path d="M25 37h7v7h-7z" fill="#00a4ef" /><path d="M33 37h7v7h-7z" fill="#ffb900" /></>, 0, 2],
  ["word", <><path d="M23 18h27v9H23z" fill="#41a5ee" /><path d="M23 26h27v8H23z" fill="#2b7cd3" /><path d="M23 34h27v8H23z" fill="#185abd" /><path d="M23 42h27v8H23z" fill="#103f91" /><rect x="15" y="25" width="18" height="18" rx="1.500" fill="#1a5dbe" /><text x="24" y="38.500" textAnchor="middle" fontFamily="Open Sans, sans-serif" fontWeight="700" fontSize="12.500" fill="#fff">W</text></>, 0, 1.5],
  ["spotify", <><circle cx="35" cy="34" r="17.800" fill="#1ed760" /><path d="M24 29q12-4 23 2.500" stroke="#111" strokeWidth="3.200" strokeLinecap="round" /><path d="M25 35q10-3 19.500 2" stroke="#111" strokeWidth="2.700" strokeLinecap="round" /><path d="M26 40.500q9-2.500 16.500 1.800" stroke="#111" strokeWidth="2.200" strokeLinecap="round" /></>, 1, 0],
  ["chrome", <><circle cx="35" cy="34" r="18" fill="#ea4335" /><path d="M19.400 25A18 18 0 0 0 35 52l7.500-14L27 38z" fill="#2ea14f" /><path d="M35 52a18 18 0 0 0 15.600-27H35l8 13z" fill="#fbc116" /><circle cx="35" cy="34" r="9" fill="#fff" /><circle cx="35" cy="34" r="7.200" fill="#2f7de9" /><circle cx="48" cy="21.500" r="12.500" fill="#626a6f" /><ellipse cx="46" cy="15.500" rx="8" ry="5.500" fill="#b3babd" /><path d="M37 26q8-6 22-5-2 11-11 12-7 0-11-7z" fill="#3c4347" /></>, 1, 0.5],
  ["linkedin", <><rect x="19" y="18" width="32" height="32" rx="2.500" fill="#0a66c2" /><text x="35" y="43.500" textAnchor="middle" fontFamily="Open Sans, sans-serif" fontWeight="700" fontSize="24" fill="#fff" textLength="19" lengthAdjust="spacingAndGlyphs">in</text><circle cx="49" cy="21" r="12" fill="#4cc2ff" /><text x="49" y="26.500" textAnchor="middle" fontFamily="Open Sans, sans-serif" fontSize="16" fill="#111">4</text></>, 1, 0],
  ["browser", <><circle cx="34" cy="34" r="16.700" fill="#f57a1d" /><path d="M24 20q10-7 20 0t6 17q-10-12-26-12z" fill="#8250f0" /><path d="M50 29q3 16-12 21-8 2-14-3 20 0 26-18z" fill="#f0b91b" /><path d="M34 25q5 2 9.500 1 1 12-9.500 18-10.500-6-9.500-18 4.500 1 9.500-1z" fill="#fff" /><circle cx="34" cy="33" r="2.600" fill="#444a72" /><path d="M33 33h2l.7 5h-3.400z" fill="#444a72" /></>, 1, 0.5],
  ["powerbi", <><path d="M36 16h13v36H36z" fill="#d8940f" /><path d="M29 25h12v27H29z" fill="#edc02f" /><path d="M21 34h12v18H21z" fill="#f7db66" /></>, 2, 0],
];

export default function App() {
  return (
    <>
      <Global />
      <Screen>
        <Title />
        <RibbonBar />
        <Body>
          <Rail>
            <RailItem $on $h={60}>
              <Glyph width="21" height="21" viewBox="0 0 21 21" stroke="#000" strokeWidth="1.600">
                <path d="M1 0v20h20M4.500 4.500h3.500V17H4.500zM10 8h3.500v9H10zM15.500 1.500H19V17h-3.500z" />
              </Glyph>
            </RailItem>
            <RailItem $h={55}>
              <Glyph width="24" height="23" viewBox="0 0 24 23" stroke="#797775" strokeWidth="1.400">
                <path d="M.7.7h22.600v21.600H.7zM.7 4h22.600M.7 10h22.600M.7 16h22.600M8.300 4v18M15.700 4v18" />
              </Glyph>
            </RailItem>
            <RailItem $h={66}>
              <Glyph width="28" height="28" viewBox="0 0 28 28" stroke="#797775" strokeWidth="1.400">
                <path d="M16 1h11v11H16zM16 5h11M1 9h11v11H1zM1 13h11M16 16h11v11H16zM16 20h11M7 9V4h9M7 20v4h9" />
              </Glyph>
            </RailItem>
            <RailItem $h={54}>
              <Glyph width="29" height="25" viewBox="0 0 29 25" stroke="#797775" strokeWidth="1.400">
                <path d="M7 15V3q0-2 2-2h7l6 6v13q0 2-1 3M16 1v6h6M25 9v11q0 3-4 4" />
                <text x="-1" y="24" stroke="none" fill="#797775" fontSize="10.500" fontWeight="600" fontFamily="Open Sans, sans-serif" textLength="20" lengthAdjust="spacingAndGlyphs">DAX</text>
              </Glyph>
            </RailItem>
          </Rail>
          <Center>
            <Stage>
              <Dotted>
                <Report>
                  <Side>
                    <Headset />
                    <SideTitle $mt={47} $ml={6} $h={33} $ls={-0.4}>MENU</SideTitle>
                    <NavButton>HOME</NavButton>
                    <NavButton $dark>GRID</NavButton>
                    <SideTitle $mt={-5} $ml={8} $h={24} $ls={-0.5}>FILTER</SideTitle>
                    <Slicer name="Date" h={101} mt={13} ml={3} />
                    <Slicer name="Channel" h={84} mt={17} />
                    <Slicer name="City" h={78} mt={21} />
                  </Side>
                  <Main>
                    <KpiStrip>
                      {kpis.map((k) => (
                        <KpiCard key={k.label} $pt={k.pt}>
                          {k.icon}
                          <KpiLabel $mt={k.mt} $ls={k.ls} $ml={k.ml}>{k.label}</KpiLabel>
                          <KpiValue $mt={k.vt}>{k.value}</KpiValue>
                        </KpiCard>
                      ))}
                    </KpiStrip>
                    <TablePanel>
                      <Grid>
                        <HeadRow>{heads.map((h, i) => <Cell key={h} $head $right={i === 7}>{h}</Cell>)}</HeadRow>
                        <Rows>
                          {data.map((r, i) => (
                            <Row key={r[0]} $alt={i % 2 === 1}>
                              {r.map((c, j) => <Cell key={j} $right={j === 7} $ls={j === 0 ? 0.1 : j === 7 ? -0.05 : j === 6 ? -0.12 : -0.2}>{c}</Cell>)}
                            </Row>
                          ))}
                        </Rows>
                        <TotalRow>
                          {heads.map((h, i) => <Cell key={h} $total $right={i === 7} $ls={i === 7 ? 0.15 : -0.2}>{i === 0 ? "Total" : i === 7 ? "824222.00" : ""}</Cell>)}
                        </TotalRow>
                      </Grid>
                      <Track />
                    </TablePanel>
                  </Main>
                </Report>
              </Dotted>
              <Push />
              <Pane $white>
                <Expand />
                <Glyph $ml={5} $mt={24} width="18" height="18" viewBox="0 0 18 18" stroke="#252423" strokeWidth="1.500">
                  <path d="M17 .8v16.400L9.500 11.500H1v-5h8.500z" />
                </Glyph>
                <Vertical $mt={12} $ls={0.1}>Filters</Vertical>
              </Pane>
            </Stage>
            <PageBar>
              <ViewIcons>
                <ViewOn>
                  <Glyph width="29" height="22" viewBox="0 0 29 22" stroke="#605e5c" strokeWidth="1.800"><path d="M1 1h27v15H1zM14.500 16v4M9.500 20.500h10" /></Glyph>
                </ViewOn>
                <Glyph $ml={38} width="20" height="30" viewBox="0 0 20 30" stroke="#605e5c" strokeWidth="1.900"><rect x="1" y="1" width="18" height="28" rx="1" /><path d="M8 25h4" /></Glyph>
                <Glyph $ml={31} width="42" height="40" viewBox="0 0 42 40"><path d="M7 13v12L0 19zM34 13v12l7-6z" fill="#c3c1bf" /></Glyph>
              </ViewIcons>
              <PageTab $w={113}>HOME</PageTab>
              <PageTab $w={103} $on>GRID</PageTab>
              <AddPage><Glyph width="16" height="16" viewBox="0 0 16 16" stroke="#fff" strokeWidth="4.500"><path d="M8 0v16M0 8h16" /></Glyph></AddPage>
            </PageBar>
          </Center>
          <Pane><Expand /><Vertical $mt={23} $ls={0.4}>Visualizations</Vertical></Pane>
          <Pane><Expand /><Vertical $mt={23} $ls={0.3}>Data</Vertical></Pane>
        </Body>
        <Status>
          <Txt $s={18} $ls={-0.25} $mt={2}>Page 2 of 2</Txt>
          <Push />
          <Glyph width="183" height="18" viewBox="0 0 183 18" stroke="#605e5c" strokeWidth="2">
            <path d="M0 10h7" /><path d="M14 9h150" strokeWidth="1.200" /><path d="M62 0v17" strokeWidth="6" /><path d="M88 5.500v7" /><path d="M171 9h11M176.500 3.500v11" />
          </Glyph>
          <Txt $s={18} $ml={20} $w={36} $ls={-0.6}>69%</Txt>
          <Glyph $ml={27} width="24" height="18" viewBox="0 0 24 18" stroke="#605e5c" strokeWidth="1.700">
            <rect x="1" y="1" width="22" height="16" /><path d="M4 7V4h4M16 4h4v3M4 11v3h4M16 14h4v-3" />
          </Glyph>
        </Status>
        <Taskbar>
          <Glyph width="44" height="46" viewBox="0 0 44 46">
            <circle cx="18" cy="22" r="10" fill="#a9c5f7" /><circle cx="9.500" cy="28" r="8" fill="#b9d0f9" /><circle cx="34" cy="28" r="8" fill="#cfdffb" /><path d="M9.500 22h24v14h-24z" fill="#c4d8fb" />
            <path d="M12 27q8 7 8 13 0 4-4.500 4T11 40zM25 27q9 8 9 13 0 5-5 5t-5-5z" fill="#1678ff" />
            <circle cx="30" cy="13" r="12.500" fill="#ff99a4" />
            <text x="30" y="18.500" textAnchor="middle" fontSize="15.500" fill="#111" fontFamily="Open Sans, sans-serif">9+</text>
          </Glyph>
          <Apps>
            {appIcons.map(([id, art, run, dx]) => (
              <AppSlot key={id} $active={run === 2}>
                <Glyph $ml={dx} width="66" height="70" viewBox="0 0 66 70">{art}</Glyph>
                {run > 0 && <Running $wide={run === 2} />}
              </AppSlot>
            ))}
          </Apps>
          <Push />
          <Glyph width="16" height="10" viewBox="0 0 16 10" stroke="#fff" strokeWidth="2"><path d="M1 9l7-7 7 7" /></Glyph>
          <Glyph $ml={28} width="25" height="20" viewBox="0 0 25 20">
            <path d="M6 8q2-8 9-7 5 1 7 7v7H6z" fill="#8b8b8b" /><circle cx="6" cy="11" r="6" fill="#c4c4c4" /><path d="M6 8l8-1 4 9H6z" fill="#dcdcdc" />
            <circle cx="18" cy="14" r="7" fill="#60cdff" /><path d="M18 12.500v5M18 9.500v2" stroke="#111" strokeWidth="2" />
          </Glyph>
          <Glyph $ml={23} width="25" height="24" viewBox="0 0 25 24" stroke="#f3f3f3" strokeWidth="1.400">
            <path d="M1 11Q3 1 12 1q8 0 11 7M23 1v7h-7M22 15q-3 8-10 8-7 0-10-7M1.500 23v-6.500h7" /><circle cx="18" cy="18" r="6" fill="#ff9a0c" stroke="none" />
          </Glyph>
          <Clock $w={36} $ml={26} $center>ENG<br />IN</Clock>
          <Glyph $ml={27} width="24" height="18" viewBox="0 0 24 18" strokeWidth="1.900">
            <path d="M1 7q11-11 22 0M4.500 10.500q7.500-7 15 0" stroke="#555" /><path d="M7.500 12.500q4.500-4 9 0" stroke="#fff" /><circle cx="12" cy="15.500" r="2" fill="#fff" />
          </Glyph>
          <Glyph $ml={12} width="25" height="20" viewBox="0 0 25 20" stroke="#fff" strokeWidth="1.600">
            <path d="M1 7h4l6-5v16l-6-5H1zM14 7q2.500 3 0 6M17 4q5 6 0 12M20 1.500q7.500 8.500 0 17" />
          </Glyph>
          <Glyph $ml={10} width="25" height="20" viewBox="0 0 25 20" stroke="#fff" strokeWidth="1.700">
            <path d="M9 4h10q3 0 3 3v8q0 3-3 3H5q-3 0-3-3v-3" /><path d="M9 7h9.500v8H5v-4z" fill="#fff" /><path d="M23.500 8.500v5M5 0L1.500 7h3L3 12l6-7.500H5.500L7 0z" fill="#fff" strokeWidth=".8" />
          </Glyph>
          <Clock $w={94} $ml={23}>19:12<DateLine>17-06-2025</DateLine></Clock>
        </Taskbar>
        <Watermark><MarkBig>Activate Windows</MarkBig><MarkSmall>Go to Settings to activate Windows.</MarkSmall></Watermark>
      </Screen>
    </>
  );
}
